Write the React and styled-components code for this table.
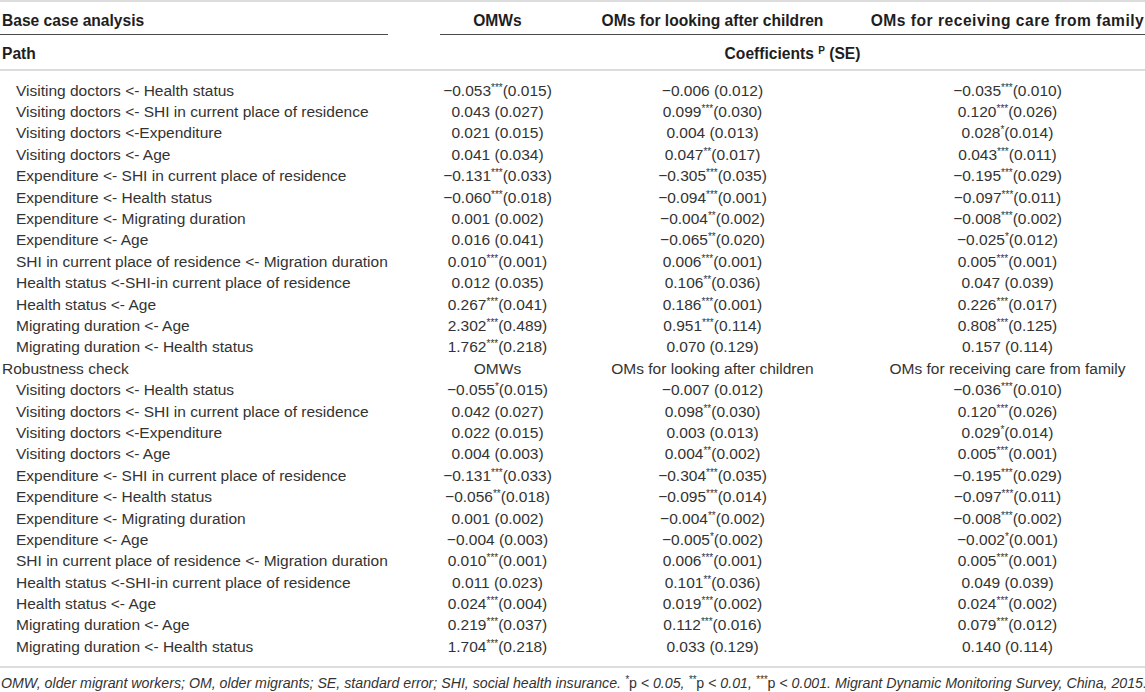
import React from "react";
import styled, { createGlobalStyle } from "styled-components";

const Global = createGlobalStyle`
  html, body { margin: 0; padding: 0; background: #fff; }
  body {
    font-family: "Liberation Sans", Arial, Helvetica, sans-serif;
    color: #333;
    font-size: 15.5px;
  }
`;

const Table = styled.div`
  width: 1145px;
  border-top: 2px solid #dcdcdc;
`;

const Row = styled.div`
  display: grid;
  grid-template-columns: 440px 115px 315px 1fr;
  align-items: center;
`;

const HeadRow = styled(Row)`
  align-items: stretch;
`;

const HeadCell = styled.div`
  font-weight: bold;
  color: #1e1e1e;
  font-size: 15.6px;
  line-height: 18px;
  padding: 10px 0 4px;
  border-bottom: 1px solid #4a4a4a;
  text-align: ${(p) => (p.$left ? "left" : "center")};
  padding-left: ${(p) => (p.$left ? "2px" : "0")};
  margin-right: ${(p) => (p.$gap ? "52px" : "0")};
  letter-spacing: ${(p) => (p.$wide ? "0.5px" : "0")};
  white-space: nowrap;
`;

const SubHeadRow = styled(Row)`
  border-bottom: 2px solid #dcdcdc;
`;

const SubHeadCell = styled.div`
  font-weight: bold;
  color: #1e1e1e;
  font-size: 15.6px;
  line-height: 18px;
  padding: 10px 0 6px;
  text-align: ${(p) => (p.$left ? "left" : "center")};
  padding-left: ${(p) => (p.$left ? "2px" : "0")};
  grid-column: ${(p) => p.$span || "auto"};
`;

const Body = styled.div`
  padding: 9px 0 8px;
  border-bottom: 2px solid #dcdcdc;
`;

const BodyRow = styled(Row)`
  height: 21.4px;
`;

const PathCell = styled.div`
  padding-left: ${(p) => (p.$section ? "2px" : "16px")};
  white-space: nowrap;
  line-height: 18px;
`;

const ValCell = styled.div`
  text-align: center;
  white-space: nowrap;
  line-height: 18px;
`;

const Sup = styled.sup`
  font-size: 10px;
  line-height: 0;
  vertical-align: 5px;
`;

const Footer = styled.div`
  font-style: italic;
  font-size: 14.2px;
  line-height: 18px;
  padding: 6px 0 0 1px;
  color: #333;
  white-space: nowrap;
`;

const Up = styled.span`
  font-style: normal;
`;

const base = [
  ["Visiting doctors <- Health status", "−0.053***(0.015)", "−0.006 (0.012)", "−0.035***(0.010)"],
  ["Visiting doctors <- SHI in current place of residence", "0.043 (0.027)", "0.099***(0.030)", "0.120***(0.026)"],
  ["Visiting doctors <-Expenditure", "0.021 (0.015)", "0.004 (0.013)", "0.028*(0.014)"],
  ["Visiting doctors <- Age", "0.041 (0.034)", "0.047**(0.017)", "0.043***(0.011)"],
  ["Expenditure <- SHI in current place of residence", "−0.131***(0.033)", "−0.305***(0.035)", "−0.195***(0.029)"],
  ["Expenditure <- Health status", "−0.060***(0.018)", "−0.094***(0.001)", "−0.097***(0.011)"],
  ["Expenditure <- Migrating duration", "0.001 (0.002)", "−0.004**(0.002)", "−0.008***(0.002)"],
  ["Expenditure <- Age", "0.016 (0.041)", "−0.065**(0.020)", "−0.025*(0.012)"],
  ["SHI in current place of residence <- Migration duration", "0.010***(0.001)", "0.006***(0.001)", "0.005***(0.001)"],
  ["Health status <-SHI-in current place of residence", "0.012 (0.035)", "0.106**(0.036)", "0.047 (0.039)"],
  ["Health status <- Age", "0.267***(0.041)", "0.186***(0.001)", "0.226***(0.017)"],
  ["Migrating duration <- Age", "2.302***(0.489)", "0.951***(0.114)", "0.808***(0.125)"],
  ["Migrating duration <- Health status", "1.762***(0.218)", "0.070 (0.129)", "0.157 (0.114)"],
];

const robust = [
  ["Visiting doctors <- Health status", "−0.055*(0.015)", "−0.007 (0.012)", "−0.036***(0.010)"],
  ["Visiting doctors <- SHI in current place of residence", "0.042 (0.027)", "0.098**(0.030)", "0.120***(0.026)"],
  ["Visiting doctors <-Expenditure", "0.022 (0.015)", "0.003 (0.013)", "0.029*(0.014)"],
  ["Visiting doctors <- Age", "0.004 (0.003)", "0.004**(0.002)", "0.005***(0.001)"],
  ["Expenditure <- SHI in current place of residence", "−0.131***(0.033)", "−0.304***(0.035)", "−0.195***(0.029)"],
  ["Expenditure <- Health status", "−0.056**(0.018)", "−0.095***(0.014)", "−0.097***(0.011)"],
  ["Expenditure <- Migrating duration", "0.001 (0.002)", "−0.004**(0.002)", "−0.008***(0.002)"],
  ["Expenditure <- Age", "−0.004 (0.003)", "−0.005*(0.002)", "−0.002*(0.001)"],
  ["SHI in current place of residence <- Migration duration", "0.010***(0.001)", "0.006***(0.001)", "0.005***(0.001)"],
  ["Health status <-SHI-in current place of residence", "0.011 (0.023)", "0.101**(0.036)", "0.049 (0.039)"],
  ["Health status <- Age", "0.024***(0.004)", "0.019***(0.002)", "0.024***(0.002)"],
  ["Migrating duration <- Age", "0.219***(0.037)", "0.112***(0.016)", "0.079***(0.012)"],
  ["Migrating duration <- Health status", "1.704***(0.218)", "0.033 (0.129)", "0.140 (0.114)"],
];

function Value({ text }) {
  const m = text.match(/^([^*]*)(\*+)(.*)$/);
  if (!m) return <ValCell>{text}</ValCell>;
  return (
    <ValCell>
      {m[1]}
      <Sup>{m[2]}</Sup>
      {m[3]}
    </ValCell>
  );
}

function DataRow({ row }) {
  return (
    <BodyRow>
      <PathCell>{row[0]}</PathCell>
      <Value text={row[1]} />
      <Value text={row[2]} />
      <Value text={row[3]} />
    </BodyRow>
  );
}

export default function App() {
  return (
    <>
      <Global />
      <Table>
        <HeadRow>
          <HeadCell $left $gap>Base case analysis</HeadCell>
          <HeadCell>OMWs</HeadCell>
          <HeadCell>OMs for looking after children</HeadCell>
          <HeadCell $wide>OMs for receiving care from family</HeadCell>
        </HeadRow>
        <SubHeadRow>
          <SubHeadCell $left>Path</SubHeadCell>
          <SubHeadCell $span="2 / 5">
            Coefficients <Sup>P</Sup> (SE)
          </SubHeadCell>
        </SubHeadRow>
        <Body>
          {base.map((r, i) => (
            <DataRow key={"b" + i} row={r} />
          ))}
          <BodyRow>
            <PathCell $section>Robustness check</PathCell>
            <ValCell>OMWs</ValCell>
            <ValCell>OMs for looking after children</ValCell>
            <ValCell>OMs for receiving care from family</ValCell>
          </BodyRow>
          {robust.map((r, i) => (
            <DataRow key={"r" + i} row={r} />
          ))}
        </Body>
        <Footer>
          OMW, older migrant workers; OM, older migrants; SE, standard error; SHI, social health insurance.{" "}
          <Sup>*</Sup>
          <Up>p</Up> &lt; 0.05, <Sup>**</Sup>
          <Up>p</Up> &lt; 0.01, <Sup>***</Sup>
          <Up>p</Up> &lt; 0.001. Migrant Dynamic Monitoring Survey, China, 2015.
        </Footer>
      </Table>
    </>
  );
}
